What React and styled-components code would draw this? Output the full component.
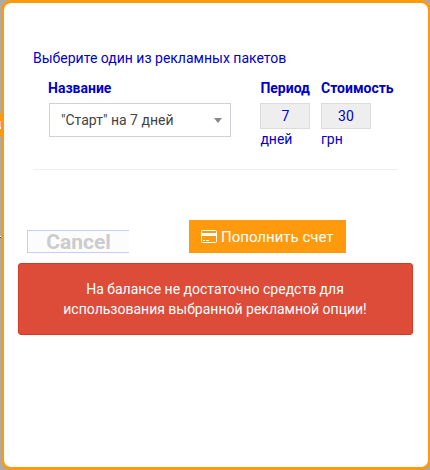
import React from 'react';
import styled, { createGlobalStyle } from 'styled-components';

const GlobalStyle = createGlobalStyle`
  * { box-sizing: border-box; }
  html, body { margin: 0; height: 100%; overflow: hidden; }
  body {
    background: #aaa;
    font-family: Roboto, "Open Sans", sans-serif;
    font-size: 14px;
    line-height: 20px;
    color: #0000c8;
  }
`;

const Page = styled.div`
  position: relative;
  width: 430px;
  height: 470px;
  padding-left: 1px;
  overflow: hidden;
`;

const PageSliver = styled.div`
  position: absolute;
  left: 0;
  top: ${(p) => p.$top}px;
  width: 1px;
  height: ${(p) => p.$height}px;
  background: ${(p) => p.$color};
`;

const Dialog = styled.section`
  position: relative;
  width: 430px;
  height: 470px;
  border: 3px solid #ff9a0f;
  border-radius: 10px;
  background: #fff;
  padding: 45px 14px 0;
`;

const Packages = styled.div`
  width: 365px;
  height: 122px;
  margin-left: 15px;
  border-bottom: 1px solid #eee;
`;

const Intro = styled.p`
  margin: 0;
`;

const Columns = styled.div`
  display: grid;
  grid-template-columns: 212.4px 60.6px 80px;
  padding: 10px 0 0 15px;
`;

const Column = styled.div`
  display: flex;
  flex-direction: column;
`;

const Label = styled.strong`
  font-weight: 700;
  height: 25px;
`;

const Select = styled.button`
  display: flex;
  align-items: center;
  justify-content: space-between;
  width: 182px;
  height: 34px;
  margin: 0 0 0 1px;
  padding: 0 8px 0 11px;
  border: 1px solid #d0d0dc;
  background: #fff;
  color: #444;
  font: inherit;
`;

const Caret = styled.span`
  border: 4px solid transparent;
  border-top: 5px solid #888;
  border-bottom: 0;
`;

const Value = styled.input`
  width: 50px;
  height: 26px;
  padding: 0;
  border: 1px solid #dcdcdc;
  border-radius: 0;
  background: #eee;
  color: #0000c8;
  font: inherit;
  text-align: center;
`;

const Actions = styled.div`
  display: flex;
  height: 93px;
  padding: 50px 0 0 9px;
`;

const CancelButton = styled.button`
  width: 102px;
  height: 23px;
  margin: 10px 60px 0 0;
  padding: 1px 0 0;
  border: 1px solid #ccccf2;
  border-right: 0;
  background: #fcfcfc;
  color: #ccc;
  font: 700 21px/20px Roboto, sans-serif;
`;

const TopUpButton = styled.button`
  display: flex;
  align-items: center;
  gap: 4px;
  width: 157px;
  height: 33px;
  padding: 0 0 0 12px;
  border: 0;
  background: #ff9a0f;
  color: #fff;
  font: 15px/20px Roboto, sans-serif;
  white-space: nowrap;
`;

const Alert = styled.div`
  width: 395px;
  height: 72px;
  padding: 15px 31px 15px 30px;
  border: 1px solid #d73925;
  border-radius: 3px;
  background: #dd4b39;
  color: #fff;
  text-align: center;
`;

const CardIcon = () => (
  <svg width="16" height="13" viewBox="0 0 16 13" fill="none">
    <rect x=".5" y=".5" width="15" height="12" rx="1" stroke="#fff" />
    <path d="M0 3h16v3H0zM2 10h2v1H2zM5 10h3v1H5z" fill="#fff" />
  </svg>
);

export default function App() {
  return (
    <Page>
      <GlobalStyle />
      <PageSliver $top={113} $height={23} $color="#ff9a0f" />
      <PageSliver $top={121} $height={6} $color="#ffb8b0" />
      <PageSliver $top={127} $height={2} $color="#fff" />
      <PageSliver $top={236} $height={1} $color="#fff" />
      <PageSliver $top={237} $height={1} $color="#444" />
      <Dialog>
        <Packages>
          <Intro>Выберите один из рекламных пакетов</Intro>
          <Columns>
            <Column>
              <Label>Название</Label>
              <Select>"Старт" на 7 дней<Caret /></Select>
            </Column>
            <Column>
              <Label>Период</Label>
              <Value readOnly value="7" />
              <span>дней</span>
            </Column>
            <Column>
              <Label>Стоимость</Label>
              <Value readOnly value="30" />
              <span>грн</span>
            </Column>
          </Columns>
        </Packages>
        <Actions>
          <CancelButton>Cancel</CancelButton>
          <TopUpButton><CardIcon />Пополнить счет</TopUpButton>
        </Actions>
        <Alert>На балансе не достаточно средств для использования выбранной рекламной опции!</Alert>
      </Dialog>
    </Page>
  );
}
